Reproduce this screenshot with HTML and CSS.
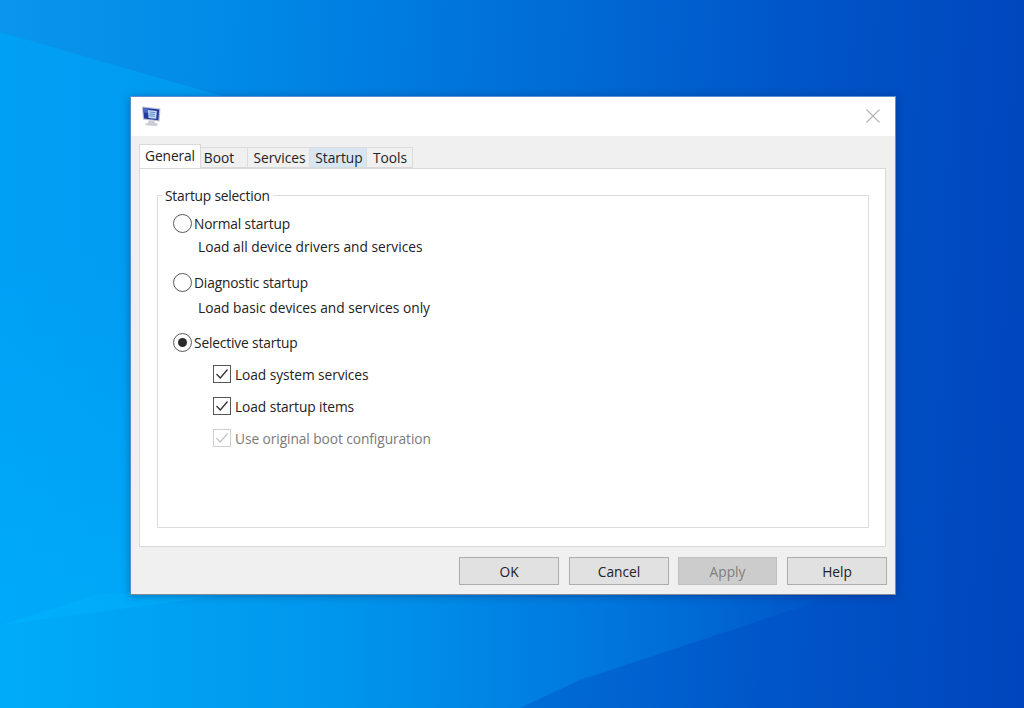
FILE: index.html
```html
<!DOCTYPE html>
<html lang="en">
<head>
<meta charset="utf-8">
<title>System Configuration</title>
<link rel="stylesheet" href="styles.css">
</head>
<body>
<main class="desktop">
  <div class="beam beam-a"></div>
  <div class="beam beam-b"></div>
  <div class="beam beam-c"></div>
  <section class="window">
    <header class="titlebar">
      <svg class="app-icon" viewBox="0 0 21 21" width="21" height="21" aria-hidden="true">
        <path d="M1 0.5 L19.5 2.5 L18.5 15.5 L2 13.5 Z" fill="#b9c0cc"/>
        <path d="M2.2 1.8 L18.2 3.6 L17.4 14.2 L3 12.6 Z" fill="#26399f"/>
        <path d="M2.2 1.8 L8 2.4 L7.6 7 L2.6 6.4 Z" fill="#4a66c4"/>
        <path d="M7 4 L15.8 5 L15.2 12.8 L7.6 12 Z" fill="#c3dcf2"/>
        <path d="M8.6 6 L14.2 6.6 M8.5 7.9 L14 8.5 M8.4 9.8 L13.8 10.4" stroke="#5b8bd0" stroke-width="1"/>
        <path d="M7.5 14.6 L13.5 15.2 L14 17 L17 17.8 L16 20 L6 19.6 L3.8 17.8 L7.2 17 Z" fill="#c9ccd1"/>
      </svg>
      <button class="close" type="button" aria-label="Close">
        <svg viewBox="0 0 16 16" width="16" height="16" aria-hidden="true"><path d="M1.5 1.5 L14.5 14.5 M14.5 1.5 L1.5 14.5" stroke="#b4b4b4" stroke-width="1.1" fill="none"/></svg>
      </button>
    </header>
    <div class="content">
      <nav class="tabs">
        <span class="tab tab-general active">General</span>
        <span class="tab tab-boot">Boot</span>
        <span class="tab tab-services">Services</span>
        <span class="tab tab-startup hover">Startup</span>
        <span class="tab tab-tools">Tools</span>
      </nav>
      <div class="panel">
        <fieldset class="group">
          <legend class="legend">Startup selection</legend>
          <div class="option option-first">
            <span class="radio"></span><span>Normal startup</span>
          </div>
          <p class="desc desc-first">Load all device drivers and services</p>
          <div class="option option-second">
            <span class="radio"></span><span>Diagnostic startup</span>
          </div>
          <p class="desc desc-second">Load basic devices and services only</p>
          <div class="option option-third">
            <span class="radio checked"></span><span>Selective startup</span>
          </div>
          <div class="checks">
            <div class="check-row">
              <span class="check"><svg viewBox="0 0 18 18" width="18" height="18" aria-hidden="true"><path d="M3.5 9 L7.3 13 L14.5 4.5" fill="none" stroke="#333" stroke-width="1.3"/></svg></span><span>Load system services</span>
            </div>
            <div class="check-row">
              <span class="check"><svg viewBox="0 0 18 18" width="18" height="18" aria-hidden="true"><path d="M3.5 9 L7.3 13 L14.5 4.5" fill="none" stroke="#333" stroke-width="1.3"/></svg></span><span>Load startup items</span>
            </div>
            <div class="check-row disabled">
              <span class="check"><svg viewBox="0 0 18 18" width="18" height="18" aria-hidden="true"><path d="M3.5 9 L7.3 13 L14.5 4.5" fill="none" stroke="#c4c4c4" stroke-width="1.3"/></svg></span><span>Use original boot configuration</span>
            </div>
          </div>
        </fieldset>
      </div>
      <footer class="actions">
        <button class="btn" type="button">OK</button>
        <button class="btn" type="button">Cancel</button>
        <button class="btn btn-disabled" type="button">Apply</button>
        <button class="btn" type="button">Help</button>
      </footer>
    </div>
  </section>
</main>
</body>
</html>
```
FILE: styles.css
```css
* { box-sizing: border-box; }
html, body { margin: 0; padding: 0; height: 100%; }
body { font-family: "Open Sans", "Noto Sans", sans-serif; font-size: 13.75px; color: #222; overflow: hidden; }
.desktop {
  position: relative; width: 1024px; height: 708px; overflow: hidden;
  background: linear-gradient(92deg, #0a96ec 0%, #0088e6 25%, #006fd8 50%, #0056c8 75%, #0045bd 100%);
}
.beam { position: absolute; inset: 0; pointer-events: none; }
.beam-a {
  background: linear-gradient(90deg, #00a0f5 0%, #009af0 20%, rgba(0,150,240,0) 50%);
  clip-path: polygon(0 32px, 225px 97px, 225px 708px, 0 708px);
}
.beam-b {
  background: linear-gradient(90deg, #00acfa 0%, #0098ee 30%, rgba(0,135,230,.7) 52%, rgba(0,125,225,.4) 68%, rgba(0,120,225,0) 82%);
  clip-path: polygon(100px 594px, 840px 594px, 580px 680px, 520px 708px, 0 708px, 0 625px);
}
.beam-c {
  background: linear-gradient(180deg, rgba(0,180,255,0) 250px, rgba(0,180,255,.45) 600px);
  clip-path: polygon(0 0, 225px 0, 225px 595px, 0 625px);
}
.window {
  position: absolute; left: 130px; top: 96px; width: 766px; height: 499px;
  background: #f0f0f0; border: 1px solid #7f8a9c; border-top-color: #5c8ecb; border-left-color: #4f8fd0;
  box-shadow: 0 1px 8px rgba(0,20,70,.35);
  display: flex; flex-direction: column;
}
.titlebar { height: 39px; background: #fff; display: flex; align-items: center; justify-content: space-between; padding: 0 14px 1px 10px; flex: none; }
.app-icon { display: block; filter: blur(.35px); }
.close { border: 0; background: none; padding: 0; width: 16px; height: 16px; display: block; margin-top: -1px; }
.close svg { display: block; }
.content { flex: 1; padding: 8px 8px 0 8px; display: flex; flex-direction: column; }
.tabs { display: flex; align-items: flex-end; height: 24px; position: relative; z-index: 1; }
.tab { height: 21px; border: 1px solid #dcdcdc; border-left: 0; border-bottom: 1px solid #d9d9d9; background: #f0f0f0; display: flex; align-items: center; justify-content: center; padding-bottom: 1px; white-space: nowrap; }
.tab.active { height: 24px; background: #fff; border: 1px solid #d9d9d9; border-bottom: 0; padding-bottom: 3px; letter-spacing: -.1px; }
.tab.hover { background: #d8e6f4; }
.tab-general { width: 62px; }
.tab-boot { width: 47px; padding-right: 10px; }
.tab-services { width: 62px; padding-left: 2px; }
.tab-startup { width: 57px; padding-left: 2px; }
.tab-tools { width: 46px; padding-left: 1px; }
.panel { height: 379px; margin-right: 1px; background: #fff; border: 1px solid #d9d9d9; padding: 17px 16px 18px 17px; }
.group { margin: 0; min-width: 0; height: 342px; border: 1px solid #dcdcdc; padding: 0 0 0 15px; }
.legend { padding: 0 3px; margin: 0 0 0 -11px; letter-spacing: -.2px; }
.option { display: flex; align-items: center; height: 20px; gap: 2px; letter-spacing: -.15px; }
.option-first { margin-top: 8px; }
.option-second { margin-top: 15px; }
.option-third { margin-top: 14px; }
.radio { width: 19px; height: 19px; border-radius: 50%; border: 1px solid #5a5a5a; background: #fff; flex: none; position: relative; }
.radio.checked::after { content: ""; position: absolute; left: 4px; top: 4px; width: 9px; height: 9px; border-radius: 50%; background: #2a2a2a; }
.desc { margin: 0 0 0 25px; line-height: 20px; }
.desc-first { margin-top: 4px; }
.desc-second { margin-top: 6px; }
.checks { margin-left: 40px; }
.check-row { display: flex; align-items: center; height: 20px; margin-top: 12px; gap: 4px; letter-spacing: -.08px; }
.check { width: 18px; height: 18px; border: 1px solid #555; background: #fff; flex: none; position: relative; }
.check svg { position: absolute; left: -1px; top: -1px; }
.disabled { color: #7a7a7a; }
.disabled .check { border-color: #cfcfcf; }
.actions { display: flex; justify-content: flex-end; padding: 10px 0 0 0; }
.btn { width: 100px; height: 28px; margin-left: 10px; background: #e1e1e1; border: 1px solid #adadad; font: inherit; color: #222; padding: 0; }
.btn-disabled { width: 99px; margin-left: 9px; background: #cccccc; border-color: #bfbfbf; color: #7f7f7f; }
```
